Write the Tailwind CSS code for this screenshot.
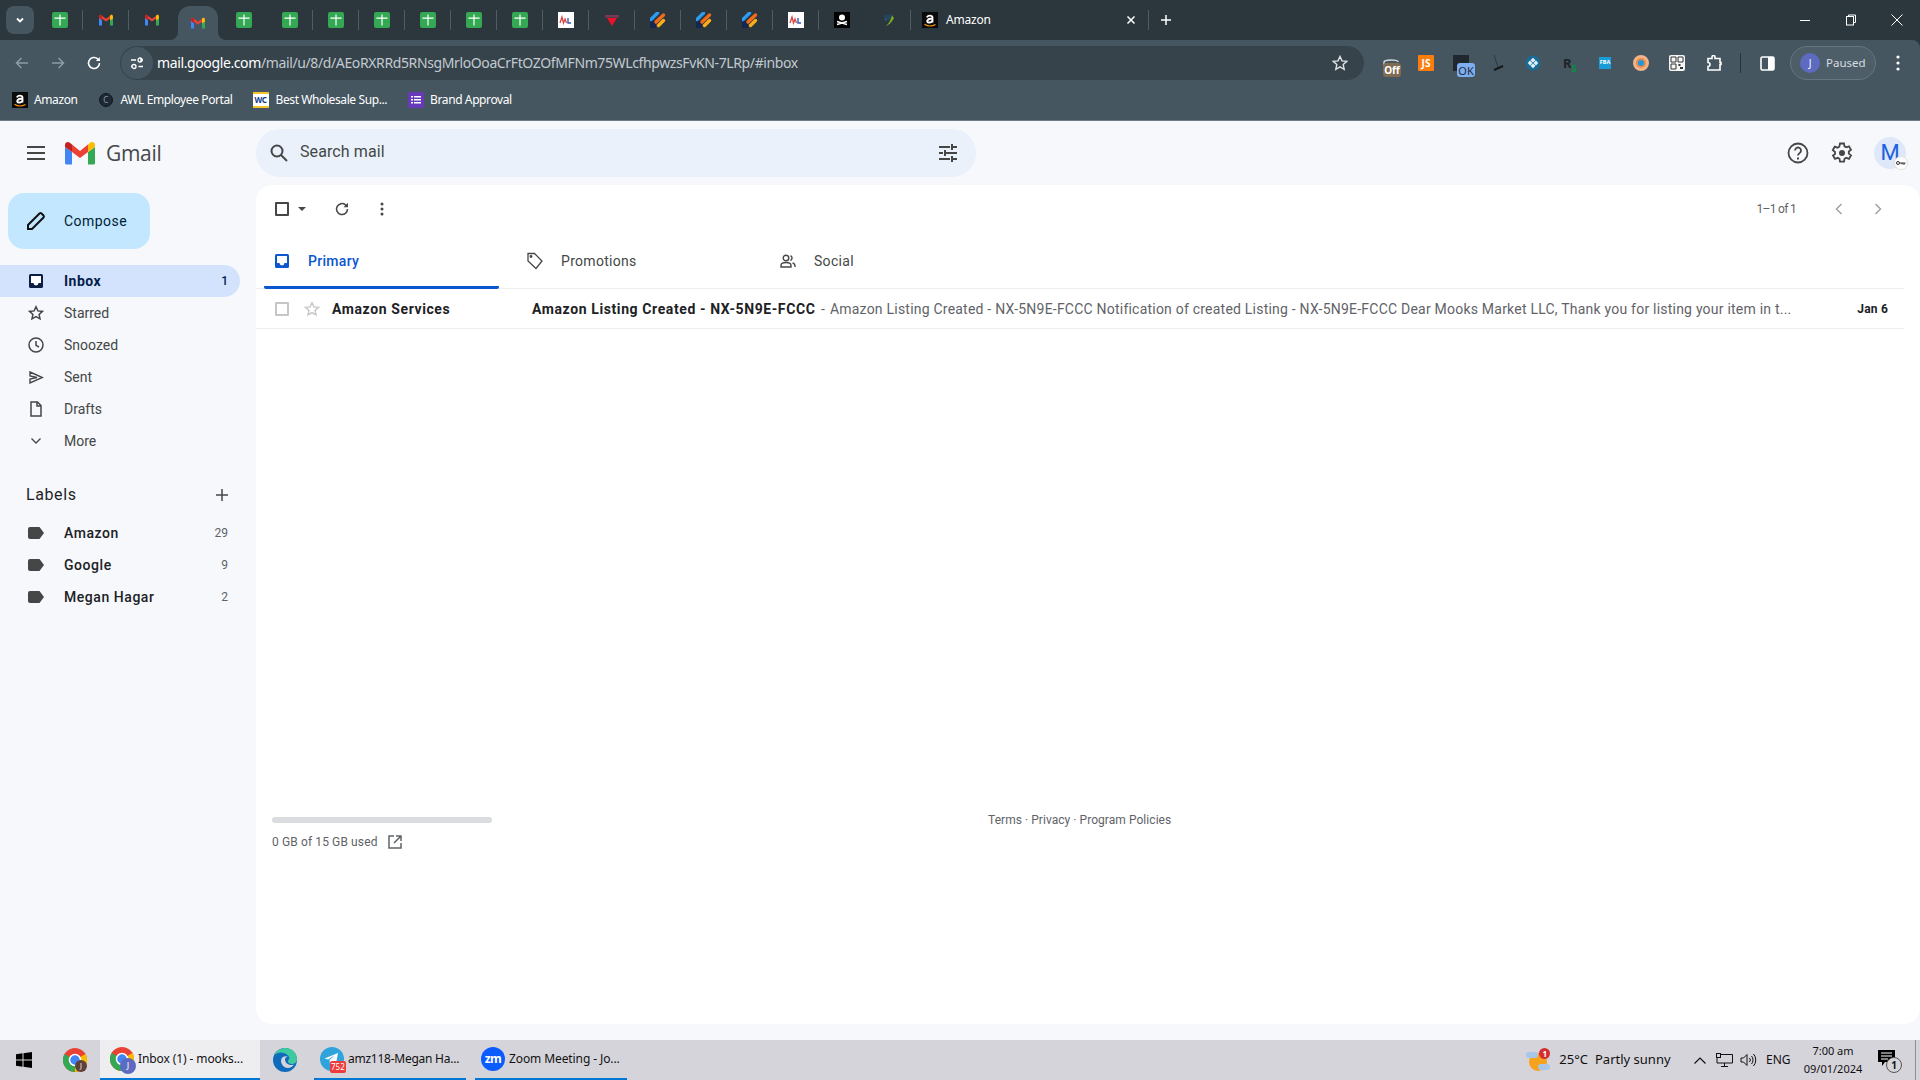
<!DOCTYPE html>
<html><head><meta charset="utf-8"><title>Inbox</title>
<script src="https://cdn.jsdelivr.net/npm/@tailwindcss/browser@4"></script></head>
<body class="w-[1920px] h-[1080px] overflow-hidden bg-[#f6f8fc] font-['Roboto',sans-serif] flex flex-col">
<svg width="0" height="0" class="absolute"><defs>
<g id="sheet"><rect width="16" height="16" rx="2" fill="#34a853"/><path d="M7.400 2.500h1.200V5.600h5V6.800h-5V13.500H7.400V6.800h-5V5.600h5z" fill="#fff"/></g>
<g id="gm"><path d="M1 3.500V13.500h3V7.500z" fill="#4285f4"/><path d="M15 3.500V13.500h-3V7.500z" fill="#34a853"/><path d="M1 4.500 8 9.500l7-5-1-2-6 4.300L2 2.500z" fill="#ea4335"/><path d="M12 3.600 14 2.500l1 2v2L12 8.500z" fill="#fbbc04"/><path d="M1 4.500 2 2.500l2 1.200v4.500L1 6z" fill="#c5221f"/></g>
<g id="jira"><rect x="0" y="9" width="6" height="7" fill="#15264f"/><path d="M1 7.500 7.500 1" stroke="#2d9bf0" stroke-width="3.400" stroke-linecap="round"/><path d="M6 10 13.500 3" stroke="#f26a1b" stroke-width="3.400" stroke-linecap="round"/><path d="M8.500 13.500l5-5" stroke="#fbae17" stroke-width="3.400" stroke-linecap="round"/></g>
<g id="wl"><rect width="16" height="16" fill="#fff"/><path d="M2 11 4 5l1.500 6L7 7l1.500 4" stroke="#d8433f" stroke-width="1.300" fill="none"/><path d="M10 6v5h3" stroke="#2f5fb5" stroke-width="1.400" fill="none"/></g>
<g id="amz"><rect width="16" height="16" fill="#0b0b0b"/><path d="M5 5.500C5.500 3 10.300 3 10.500 5.500V10.500M10.500 6.500C4.500 6.500 4 10.500 7 10.500 9 10.500 10.500 9.500 10.500 8" stroke="#fff" stroke-width="1.800" fill="none"/><path d="M2.500 12.200C6 14.500 10 14.500 13.500 12.500" stroke="#f90" stroke-width="1.100" fill="none"/></g>
<g id="chrome"><circle cx="12" cy="12" r="12" fill="#ea4335"/><path d="M12 12 22.400 6A12 12 0 0 1 12 24z" fill="#fbbc04"/><path d="M12 12 12 24A12 12 0 0 1 1.600 6z" fill="#34a853"/><circle cx="12" cy="12" r="5.500" fill="#4285f4" stroke="#fff" stroke-width="1.500"/></g>
<path id="lab" d="M2 0h9.500L16 6l-4.500 6H2a2 2 0 0 1-2-2V2a2 2 0 0 1 2-2z" fill="#444746"/>
</defs></svg>

<!-- Browser chrome -->
<header class="h-[121px] shrink-0 bg-[#2c363d] flex flex-col border-b border-[#6d7d88] font-['Noto_Sans',sans-serif]">
  <div class="h-[40px] shrink-0 flex items-center relative">
    <div class="w-[28px] h-[28px] ml-[6px] rounded-lg bg-[#455660] flex items-center justify-center"><svg width="12" height="12" viewBox="0 0 12 12" fill="none" stroke="#fff" stroke-width="1.800"><path d="M3 4.500 6 7.500 9 4.500"/></svg></div>
    <div class="flex items-center ml-[3px] h-full">
      <span class="w-[46px] flex justify-center border-r border-[#4f5c65] h-[20px] items-center"><svg width="16" height="16"><use href="#sheet"/></svg></span>
      <span class="w-[46px] flex justify-center border-r border-[#4f5c65] h-[20px] items-center"><svg width="16" height="16"><use href="#gm"/></svg></span>
      <span class="w-[46px] flex justify-center h-[20px] items-center"><svg width="16" height="16"><use href="#gm"/></svg></span>
      <span class="relative ml-[3px] mr-[3px] w-[40px] h-[34px] self-end flex justify-center items-center rounded-t-xl bg-[#455660]">
        <svg class="absolute -left-[8px] bottom-0" width="8" height="8" viewBox="0 0 8 8"><path d="M0 8a8 8 0 0 0 8-8v8z" fill="#455660"/></svg>
        <svg width="16" height="16"><use href="#gm"/></svg>
        <svg class="absolute -right-[8px] bottom-0" width="8" height="8" viewBox="0 0 8 8"><path d="M8 8a8 8 0 0 1-8-8v8z" fill="#455660"/></svg>
      </span>
      <span class="w-[46px] flex justify-center h-[20px] items-center"><svg width="16" height="16"><use href="#sheet"/></svg></span>
      <span class="w-[46px] flex justify-center border-r border-[#4f5c65] h-[20px] items-center"><svg width="16" height="16"><use href="#sheet"/></svg></span>
      <span class="w-[46px] flex justify-center border-r border-[#4f5c65] h-[20px] items-center"><svg width="16" height="16"><use href="#sheet"/></svg></span>
      <span class="w-[46px] flex justify-center border-r border-[#4f5c65] h-[20px] items-center"><svg width="16" height="16"><use href="#sheet"/></svg></span>
      <span class="w-[46px] flex justify-center border-r border-[#4f5c65] h-[20px] items-center"><svg width="16" height="16"><use href="#sheet"/></svg></span>
      <span class="w-[46px] flex justify-center border-r border-[#4f5c65] h-[20px] items-center"><svg width="16" height="16"><use href="#sheet"/></svg></span>
      <span class="w-[46px] flex justify-center border-r border-[#4f5c65] h-[20px] items-center"><svg width="16" height="16"><use href="#sheet"/></svg></span>
      <span class="w-[46px] flex justify-center border-r border-[#4f5c65] h-[20px] items-center"><svg width="16" height="16"><use href="#wl"/></svg></span>
      <span class="w-[46px] flex justify-center border-r border-[#4f5c65] h-[20px] items-center"><svg width="16" height="16" viewBox="0 0 16 16"><path d="M1 3h14v2.500H1z" fill="#7a3a55"/><path d="M3 6h10l-5 8z" fill="#e8132b"/></svg></span>
      <span class="w-[46px] flex justify-center border-r border-[#4f5c65] h-[20px] items-center"><svg width="16" height="16"><use href="#jira"/></svg></span>
      <span class="w-[46px] flex justify-center border-r border-[#4f5c65] h-[20px] items-center"><svg width="16" height="16"><use href="#jira"/></svg></span>
      <span class="w-[46px] flex justify-center border-r border-[#4f5c65] h-[20px] items-center"><svg width="16" height="16"><use href="#jira"/></svg></span>
      <span class="w-[46px] flex justify-center border-r border-[#4f5c65] h-[20px] items-center"><svg width="16" height="16"><use href="#wl"/></svg></span>
      <span class="w-[46px] flex justify-center h-[20px] items-center"><svg width="16" height="16" viewBox="0 0 16 16"><rect width="16" height="16" fill="#000"/><circle cx="8" cy="5.500" r="3" fill="#fff"/><path d="M3 12.500 13 9.500M3 9.500l10 3" stroke="#fff" stroke-width="1.800"/></svg></span>
      <span class="w-[46px] flex justify-center border-r border-[#4f5c65] h-[20px] items-center"><svg width="16" height="16" viewBox="0 0 16 16"><path d="M3 4c4-2 8-2 11-1L9 9z" fill="#26445a"/><path d="M12 3.500C11 8 8.500 12 5.500 14.500 9 13 12 10 14 6z" fill="#7eaf23"/><path d="M4 6.500c2-1 3-.5 3.500 1l-2 2z" fill="#26547a"/></svg></span>
    </div>
    <div class="w-[238px] flex items-center h-[20px] border-r border-[#4f5c65] pl-[11px] pr-[12px] text-white text-[12px] tracking-[-0.2px]">
      <svg width="16" height="16"><use href="#amz"/></svg><span class="ml-[8px] flex-1">Amazon</span>
      <svg width="10" height="10" viewBox="0 0 10 10" stroke="#fff" stroke-width="1.500"><path d="M1.500 1.500l7 7M8.500 1.500l-7 7"/></svg>
    </div>
    <svg class="ml-[11px]" width="12" height="12" viewBox="0 0 12 12" stroke="#fff" stroke-width="1.500"><path d="M6 1v10M1 6h10"/></svg>
    <div class="ml-auto flex items-center h-full pr-[17px] gap-[34px]">
      <svg width="12" height="12" viewBox="0 0 12 12" stroke="#fff"><path d="M1 6.500h10"/></svg>
      <svg width="12" height="12" viewBox="0 0 12 12" stroke="#fff" fill="none"><path d="M3.500 2.500V1h7v7.500H8.500"/><rect x="1.500" y="2.500" width="7" height="8.500"/></svg>
      <svg width="12" height="12" viewBox="0 0 12 12" stroke="#fff"><path d="M.5.500l11 11M11.500.500l-11 11"/></svg>
    </div>
  </div>
  <div class="flex-1 bg-[#455660] rounded-tr-lg flex flex-col">
    <div class="h-[41px] flex items-center relative pt-[5px]">
      <svg class="ml-[14px]" width="16" height="16" viewBox="0 0 16 16" fill="none" stroke="#8d9aa3" stroke-width="1.500"><path d="M14 8H2.500M7.500 3 2.500 8l5 5"/></svg>
      <svg class="ml-[20px]" width="16" height="16" viewBox="0 0 16 16" fill="none" stroke="#8d9aa3" stroke-width="1.500"><path d="M2 8h11.500M8.500 3l5 5-5 5"/></svg>
      <svg class="ml-[20px]" width="16" height="16" viewBox="0 0 16 16" fill="none" stroke="#fff" stroke-width="1.600"><path d="M13.500 8A5.500 5.500 0 1 1 11.800 4L13.500 5.700"/><path d="M13.800 2v4h-4z" fill="#fff" stroke="none"/></svg>
      <div class="ml-[18px] w-[1244px] h-[34px] rounded-full bg-[#36434b] flex items-center relative">
        <span class="ml-[1px] w-[32px] h-[32px] rounded-full bg-[#455660] flex items-center justify-center"><svg width="14" height="14" viewBox="0 0 14 14" fill="none" stroke="#fff" stroke-width="1.300"><path d="M1 4h5M8.500 10.500H13"/><circle cx="10" cy="4" r="2"/><circle cx="4" cy="10.500" r="2"/><path d="M10 4h3M1 10.500h1"/></svg></span>
        <span class="ml-[4px] text-[14px] leading-none tracking-[-0.38px] text-[#c2cad0] whitespace-nowrap"><span class="text-white">mail.google.com</span>/mail/u/8/d/AEoRXRRd5RNsgMrloOoaCrFtOZOfMFNm75WLcfhpwzsFvKN-7LRp/#inbox</span>
        <svg class="absolute right-[16px] top-[9px]" width="16" height="16" viewBox="0 0 16 16" fill="none" stroke="#dfe3e6" stroke-width="1.400"><path d="M8 1.500l2 4.400 4.700.5-3.500 3.200 1 4.700L8 11.900l-4.200 2.400 1-4.700L1.300 6.400 6 5.900z"/></svg>
      </div>
      <!-- extensions -->
      <div class="relative ml-[19px] w-[18px] h-[16px]">
        <svg class="absolute left-0 top-[4px]" width="16" height="10" viewBox="0 0 16 10" fill="none" stroke="#cfd4d8" stroke-width="1.500"><path d="M1 9V3C1 2 4 1 8 1s7 .800 7 2"/></svg>
        <span class="absolute left-0 top-[8px] w-[18px] h-[14px] rounded-[3px] bg-[#7f6a52] text-white text-[10px] font-bold flex items-center justify-center leading-none">Off</span>
      </div>
      <span class="ml-[17px] w-[16px] h-[16px] rounded-[1px] bg-[#fb7d0e] text-white text-[10px] font-bold flex items-center justify-center">JS</span>
      <div class="relative ml-[19px] w-[22px] h-[16px]">
        <span class="absolute left-0 top-0 w-[16px] h-[16px] bg-[#20272e]"></span>
        <span class="absolute left-[4px] top-[8px] w-[18px] h-[14px] rounded-[3px] bg-[#7eaef0] text-[#1e2a3a] text-[11px] flex items-center justify-center leading-none">OK</span>
      </div>
      <svg class="ml-[18px]" width="12" height="16" viewBox="0 0 12 16" fill="none"><path d="M1 0l4 12" stroke="#2b3237" stroke-width=".8"/><path d="M1 15l9-4" stroke="#14181b" stroke-width="2"/></svg>
      <svg class="ml-[20px]" width="16" height="16" viewBox="0 0 16 16"><circle cx="8" cy="8" r="7.500" fill="#1c6a96"/><path d="M8 2.800 10.500 5.300 8 7.500 5.500 5.300zM8 8.500l2.500 2.200L8 13.200 5.500 10.700zM7.500 8 5 10.500 2.800 8 5 5.500zM8.500 8 11 5.500 13.200 8 11 10.500z" fill="#dff1fb"/></svg>
      <span class="ml-[22px] w-[16px] text-[13px] font-bold text-[#1d2227] leading-none relative">R<span class="absolute left-[8px] top-[5px] text-[#0e8a45] text-[12px]">s</span></span>
      <span class="ml-[20px] w-[12px] h-[12px] bg-[#1a9cd8] text-white text-[5.500px] font-bold flex items-center justify-center leading-none">FBA</span>
      <span class="ml-[22px] w-[16px] h-[16px] rounded-full bg-[#e98a4b] border-[3px] border-[#f1b48a] flex items-center justify-center"><span class="w-[6px] h-[6px] rounded-full bg-[#1f96dd]"></span></span>
      <svg class="ml-[20px]" width="16" height="16" viewBox="0 0 16 16"><rect width="16" height="16" rx="2" fill="#f5f5f5"/><path d="M2 2h5v5H2zM9 2h5v5H9zM2 9h5v5H2z" fill="none" stroke="#333"/><path d="M9.500 9h2v2h-2zM11 12h3v2h-3z" fill="#333"/></svg>
      <svg class="ml-[21px]" width="16" height="16" viewBox="0 0 16 16" fill="none" stroke="#fff" stroke-width="1.600"><path d="M2 3.500h4V2a1.500 1.500 0 0 1 3 0v1.500h5v4h1v2h-1V15H2v-3.500a2 2 0 0 0 0-4z"/></svg>
      <span class="ml-[18px] w-[1px] h-[20px] bg-[#2a3339]"></span>
      <svg class="ml-[19px]" width="15" height="15" viewBox="0 0 15 15"><rect x="1" y="1" width="13" height="13" rx="1.500" fill="none" stroke="#fff" stroke-width="1.600"/><rect x="8" y="1" width="6" height="13" fill="#fff"/></svg>
      <div class="ml-[15px] w-[86px] h-[34px] rounded-full border border-[#657680] bg-[#4e5e68] flex items-center pl-[9px] gap-[6px] text-[11.500px] text-[#d6dde2]">
        <span class="w-[20px] h-[20px] rounded-full bg-[#5c6bc0] text-white text-[10px] flex items-center justify-center">J</span>Paused</div>
      <svg class="ml-[19px]" width="6" height="16" viewBox="0 0 6 16" fill="#fff"><circle cx="3" cy="2" r="1.600"/><circle cx="3" cy="8" r="1.600"/><circle cx="3" cy="14" r="1.600"/></svg>
    </div>
    <div class="flex-1 flex items-center pl-[12px] pb-[1px] text-[12px] text-white tracking-[-0.4px] leading-none">
      <svg width="16" height="16"><use href="#amz"/></svg><span class="ml-[6px]">Amazon</span>
      <span class="ml-[21px] w-[14px] h-[14px] rounded-full bg-[#1d2a35] border border-[#10181e] flex items-center justify-center text-[8px] text-[#8a98a3]">C</span><span class="ml-[8px]">AWL Employee Portal</span>
      <span class="ml-[20px] w-[16px] h-[16px] bg-white relative overflow-hidden flex items-center justify-center text-[8px] font-bold text-[#123a8c] border-y-[2px] border-[#f6c32c]">WC</span><span class="ml-[7px]">Best Wholesale Sup...</span>
      <span class="ml-[21px] w-[16px] h-[16px] bg-[#673ab7] flex items-center justify-center"><svg width="10" height="8" viewBox="0 0 10 8" fill="#fff"><path d="M0 0h2v1.500H0zM3 0h7v1.500H3zM0 3h2v1.500H0zM3 3h7v1.500H3zM0 6h2v1.500H0zM3 6h7v1.500H3z"/></svg></span><span class="ml-[6px]">Brand Approval</span>
    </div>
  </div>
</header>

<!-- Gmail -->
<div class="flex-1 flex flex-col min-h-0">
  <div class="h-[64px] shrink-0 flex items-center relative">
    <svg class="ml-[26px]" width="20" height="14" viewBox="0 0 20 14" fill="#444746"><path d="M1 0h18v2H1zM1 6h18v2H1zM1 12h18v2H1z"/></svg>
    <svg class="ml-[18px]" width="32" height="24" viewBox="0 0 32 24"><path d="M1 6v16a1.500 1.500 0 0 0 1.500 1.500H8V11z" fill="#4285f4"/><path d="M31 6v16a1.500 1.500 0 0 1-1.500 1.500H24V11z" fill="#34a853"/><path d="M8 11V3.500L16 10l8-6.500V11l-8 6z" fill="#ea4335"/><path d="M24 3.500l2.500-2C28.500 0 31 1.500 31 4v2l-7 5z" fill="#fbbc04"/><path d="M8 3.500l-2.500-2C3.500 0 1 1.500 1 4v2l7 5z" fill="#c5221f"/></svg>
    <span class="ml-[10px] w-[58px] text-[21px] leading-none text-[#444746] font-['Open_Sans',sans-serif] tracking-[-0.3px]">Gmail</span>
    <div class="ml-[92px] w-[720px] h-[48px] rounded-full bg-[#eaf1fb] flex items-center">
      <svg class="ml-[13px]" width="20" height="20" viewBox="0 0 20 20" fill="none" stroke="#444746" stroke-width="2"><circle cx="8" cy="8" r="5.500"/><path d="M12 12l6 6"/></svg>
      <span class="ml-[11px] text-[16px] text-[#444746] -mt-[2px] tracking-[0.1px]">Search mail</span>
      <svg class="ml-auto mr-[18px]" width="20" height="18" viewBox="0 0 20 18" stroke="#444746" stroke-width="2"><path d="M1 3h11M15 3h4M14 0v6M1 9h4M8 9h11M7 6v6M1 15h11M15 15h4M14 12v6" fill="none"/></svg>
    </div>
    <div class="ml-auto flex items-center">
      <svg width="24" height="24" viewBox="0 0 24 24" fill="none" stroke="#444746" stroke-width="1.800"><circle cx="12" cy="12" r="9.500"/><path d="M9 9.500a3 3 0 1 1 4.800 2.400c-1 .800-1.800 1.300-1.800 2.600"/><path d="M11 16.500h2v2h-2z" fill="#444746" stroke="none"/></svg>
      <svg class="ml-[20px]" width="24" height="24" viewBox="0 0 24 24" fill="none" stroke="#444746" stroke-width="1.800"><path d="M10 2.500h4l.5 2.800 1.800 1 2.700-1 2 3.400-2.200 1.800v2.100l2.200 1.800-2 3.400-2.700-1-1.800 1-.5 2.800h-4l-.5-2.800-1.800-1-2.700 1-2-3.400L5 13V11L2.800 9.100l2-3.400 2.700 1 1.800-1z"/><circle cx="12" cy="12" r="3" fill="#444746" stroke="none"/></svg>
      <div class="relative ml-[20px] mr-[14px] w-[32px] h-[32px] rounded-full bg-[#dfe8f8] flex items-center justify-center text-[22px] text-[#1a62e0] leading-none">M
        <span class="absolute -right-[2px] -bottom-[1px] w-[14px] h-[14px] rounded-full bg-white border border-[#e0e0e0] flex items-center justify-center"><svg width="10" height="5" viewBox="0 0 10 5" fill="none" stroke="#333"><circle cx="2" cy="2" r="1.500"/><path d="M3.500 2H9.500M8 2v2M6 2v1.500"/></svg></span>
      </div>
    </div>
  </div>

  <div class="flex-1 flex min-h-0">
    <nav class="w-[256px] shrink-0 flex flex-col text-[14px] text-[#444746]">
      <div class="ml-[8px] mt-[8px] w-[142px] h-[56px] rounded-2xl bg-[#c2e7ff] flex items-center text-[#001d35]">
        <svg class="ml-[18px]" width="20" height="20" viewBox="0 0 20 20" fill="none" stroke="#111" stroke-width="2"><path d="M2 18v-4L13.500 2.500a1.500 1.500 0 0 1 2 0l2 2a1.500 1.500 0 0 1 0 2L6 18z"/></svg>
        <span class="ml-[18px] text-[14px] tracking-[0.45px]">Compose</span>
      </div>
      <div class="mt-[16px] w-[240px] h-[32px] rounded-r-full bg-[#d3e3fd] flex items-center font-bold text-[#041e49]">
        <svg class="ml-[29px]" width="14" height="14" viewBox="0 0 14 14"><path d="M0 1.500A1.500 1.500 0 0 1 1.500 0h11A1.500 1.500 0 0 1 14 1.500v11a1.500 1.500 0 0 1-1.500 1.500h-11A1.500 1.500 0 0 1 0 12.500z" fill="#0b1f45"/><path d="M2 2h10v7H9.500a2.500 2.500 0 0 1-5 0H2z" fill="#fff"/></svg>
        <span class="ml-[21px] flex-1 tracking-[0.5px]">Inbox</span><span class="mr-[12px] text-[12px] font-medium">1</span>
      </div>
      <div class="w-[240px] h-[32px] flex items-center">
        <svg class="ml-[28px]" width="16" height="16" viewBox="0 0 16 16" fill="none" stroke="#444746" stroke-width="1.500"><path d="M8 1.800l1.900 4.100 4.500.5-3.300 3 .9 4.500L8 11.600l-4 2.300.9-4.500-3.300-3 4.500-.5z"/></svg>
        <span class="ml-[20px]">Starred</span></div>
      <div class="w-[240px] h-[32px] flex items-center">
        <svg class="ml-[28px]" width="16" height="16" viewBox="0 0 16 16" fill="none" stroke="#444746" stroke-width="1.500"><circle cx="8" cy="8" r="7"/><path d="M8 4v4.300l3 1.700"/></svg>
        <span class="ml-[20px]">Snoozed</span></div>
      <div class="w-[240px] h-[32px] flex items-center">
        <svg class="ml-[29px]" width="15" height="13" viewBox="0 0 15 13" fill="none" stroke="#444746" stroke-width="1.400"><path d="M1 1l12.500 5.500L1 12V8l7-1.500L1 5z"/></svg>
        <span class="ml-[20px]">Sent</span></div>
      <div class="w-[240px] h-[32px] flex items-center">
        <svg class="ml-[30px]" width="12" height="16" viewBox="0 0 12 16" fill="none" stroke="#444746" stroke-width="1.500"><path d="M1 1h6.500L11 4.500V15H1zM7 1v4h4"/></svg>
        <span class="ml-[22px]">Drafts</span></div>
      <div class="w-[240px] h-[32px] flex items-center">
        <svg class="ml-[31px]" width="10" height="6" viewBox="0 0 10 6" fill="none" stroke="#444746" stroke-width="1.300"><path d="M.500.500 5 5 9.500.500"/></svg>
        <span class="ml-[23px]">More</span></div>
      <div class="mt-[22px] h-[32px] w-[240px] flex items-center">
        <span class="ml-[26px] flex-1 text-[16px] text-[#1f1f1f] tracking-[0.6px]">Labels</span>
        <svg class="mr-[12px]" width="12" height="12" viewBox="0 0 12 12" stroke="#444746" stroke-width="1.500"><path d="M6 0v12M0 6h12"/></svg>
      </div>
      <div class="mt-[6px] w-[240px] h-[32px] flex items-center font-medium text-[#202124]">
        <svg class="ml-[28px]" width="16" height="12" viewBox="0 0 16 12"><use href="#lab"/></svg>
        <span class="ml-[20px] flex-1 tracking-[0.55px]">Amazon</span><span class="mr-[12px] text-[12px] font-normal text-[#5f6368]">29</span></div>
      <div class="w-[240px] h-[32px] flex items-center font-medium text-[#202124]">
        <svg class="ml-[28px]" width="16" height="12" viewBox="0 0 16 12"><use href="#lab"/></svg>
        <span class="ml-[20px] flex-1 tracking-[0.55px]">Google</span><span class="mr-[12px] text-[12px] font-normal text-[#5f6368]">9</span></div>
      <div class="w-[240px] h-[32px] flex items-center font-medium text-[#202124]">
        <svg class="ml-[28px]" width="16" height="12" viewBox="0 0 16 12"><use href="#lab"/></svg>
        <span class="ml-[20px] flex-1 tracking-[0.55px]">Megan Hagar</span><span class="mr-[12px] text-[12px] font-normal text-[#5f6368]">2</span></div>
    </nav>

    <main class="flex-1 mb-[16px] bg-white rounded-2xl flex flex-col min-w-0">
      <div class="h-[48px] shrink-0 flex items-center">
        <span class="ml-[19px] w-[14px] h-[14px] border-2 border-[#444746] rounded-[1px]"></span>
        <svg class="ml-[9px]" width="8" height="4" viewBox="0 0 8 4" fill="#444746"><path d="M0 0h8L4 4z"/></svg>
        <svg class="ml-[28px]" width="16" height="16" viewBox="0 0 16 16" fill="none" stroke="#444746" stroke-width="1.500"><path d="M13.500 8A5.500 5.500 0 1 1 11.500 3.800L13.500 5.500"/><path d="M14 1.800V6.200H9.600z" fill="#444746" stroke="none"/></svg>
        <svg class="ml-[30px]" width="4" height="14" viewBox="0 0 4 14" fill="#444746"><circle cx="2" cy="2" r="1.500"/><circle cx="2" cy="7" r="1.500"/><circle cx="2" cy="12" r="1.500"/></svg>
        <span class="ml-auto text-[12px] text-[#5f6368] tracking-[-0.7px]">1–1 of 1</span>
        <svg class="ml-[39px]" width="8" height="12" viewBox="0 0 8 12" fill="none" stroke="#9aa0a6" stroke-width="1.400"><path d="M6.500 1 1.500 6l5 5"/></svg>
        <svg class="ml-[31px] mr-[38px]" width="8" height="12" viewBox="0 0 8 12" fill="none" stroke="#9aa0a6" stroke-width="1.400"><path d="M1.500 1l5 5-5 5"/></svg>
      </div>
      <div class="h-[56px] mr-[16px] shrink-0 flex border-b border-[#eceff1] relative text-[14px] text-[#444746] tracking-[0.3px]">
        <div class="ml-[8px] w-[235px] h-[56px] pt-[3px] flex items-center border-b-[3px] border-[#0b57d0] rounded-b-[2px] font-medium text-[#0b57d0]">
          <svg class="ml-[11px]" width="14" height="14" viewBox="0 0 14 14"><rect width="14" height="14" rx="1.500" fill="#0b57d0"/><path d="M2 2h10v7H9.500a2.500 2.500 0 0 1-5 0H2z" fill="#fff"/></svg>
          <span class="ml-[19px]">Primary</span></div>
        <div class="ml-[28px] w-[253px] h-[56px] flex items-center">
          <svg width="16" height="18" viewBox="0 0 16 18" fill="none" stroke="#444746" stroke-width="1.300"><path d="M1 1.500h6.500L15 9l-6 7.500L1 9z"/><circle cx="4" cy="4.500" r=".800" fill="#444746"/></svg>
          <span class="ml-[18px]">Promotions</span></div>
        <div class="w-[200px] h-[56px] flex items-center">
          <svg width="16" height="14" viewBox="0 0 16 14" fill="none" stroke="#444746" stroke-width="1.400"><circle cx="6" cy="4" r="2.800"/><path d="M1 13v-1.500C1 9.500 3.500 8.500 6 8.500s5 1 5 3V13zM10.500 1.500a2.800 2.800 0 0 1 0 5M12.500 8.800c1.500.500 2.500 1.500 2.500 3V13"/></svg>
          <span class="ml-[18px]">Social</span></div>
      </div>
      <div class="h-[40px] mr-[16px] pt-[1px] shrink-0 flex items-center border-b border-[#eceff1] text-[14px] relative">
        <span class="ml-[19px] w-[14px] h-[14px] border-2 border-[#c4c7c5] rounded-[1px]"></span>
        <svg class="ml-[15px]" width="16" height="16" viewBox="0 0 16 16" fill="none" stroke="#c4c7c5" stroke-width="1.400"><path d="M8 1.800l1.900 4.100 4.500.5-3.300 3 .9 4.500L8 11.600l-4 2.300.9-4.500-3.300-3 4.500-.5z"/></svg>
        <span class="ml-[12px] w-[200px] font-bold text-[#202124] tracking-[0.6px]">Amazon Services</span>
        <span class="whitespace-nowrap text-[#5f6368] tracking-[0.22px]"><b class="font-bold text-[#202124] tracking-[0.6px]">Amazon Listing Created - NX-5N9E-FCCC</b><span class="ml-[2px]"> - </span><span class="ml-[1px]">Amazon Listing Created - NX-5N9E-FCCC Notification of created Listing - NX-5N9E-FCCC Dear Mooks Market LLC, Thank you for listing your item in t...</span></span>
        <span class="ml-auto mr-[16px] text-[12px] font-bold text-[#202124] tracking-[0.2px]">Jan 6</span>
      </div>
      <div class="mt-auto mb-[173px] flex items-start relative">
        <div class="ml-[16px] w-[220px]">
          <div class="h-[6px] rounded-full bg-[#dadce0]"></div>
          <div class="mt-[10px] flex items-center text-[12px] text-[#5f6368] tracking-[0.12px] whitespace-nowrap">0 GB of 15 GB used
            <svg class="ml-[10px]" width="14" height="14" viewBox="0 0 14 14" fill="none" stroke="#5f6368" stroke-width="1.500"><path d="M6 1H1v12h12V8M8 1h5v5M13 1 6 8"/></svg></div>
        </div>
        <div class="ml-[496px] -mt-[6px] text-[12px] text-[#5f6368] tracking-[0.05px]">Terms · Privacy · Program Policies</div>
      </div>
    </main>
  </div>
</div>

<!-- Taskbar -->
<footer class="h-[40px] shrink-0 bg-[#d5d4da] flex items-center text-[12px] text-[#111] font-['Noto_Sans',sans-serif] relative">
  <svg class="ml-[16px]" width="16" height="16" viewBox="0 0 16 16" fill="#000"><path d="M0 2.200 6.500 1.300v6.200H0zM7.500 1.200 16 0v7.500H7.500zM0 8.500h6.500v6.200L0 13.800zM7.500 8.500H16V16l-8.500-1.200z"/></svg>
  <div class="ml-[31px] w-[38px] h-full flex items-center relative">
    <svg width="24" height="24"><use href="#chrome"/></svg>
    <span class="absolute left-[12px] top-[20px] w-[12px] h-[12px] rounded-full bg-[#5d4037] text-white text-[7px] flex items-center justify-center">J</span>
  </div>
  <div class="-ml-[1px] w-[160px] h-full bg-[#eeeef1] border-b-[2px] border-[#0078d4] flex items-center pl-[10px] relative">
    <svg width="24" height="24"><use href="#chrome"/></svg>
    <span class="absolute left-[20px] top-[18px] w-[16px] h-[16px] rounded-full bg-[#5c6bc0] text-white text-[9px] flex items-center justify-center">J</span>
    <span class="ml-[4px] whitespace-nowrap tracking-[-0.1px]">Inbox (1) - mooks...</span>
  </div>
  <svg class="ml-[13px]" width="24" height="24" viewBox="0 0 24 24"><circle cx="12" cy="12" r="12" fill="#0f6cbd"/><path d="M1 8C3 2 9 0 13 0c6 0 11 5 11 11 0 2.500-1.500 5-5 5-2.500 0-4-1-4-2.500C15 11 18 11 15 7.500 11 3 3 4 1 8z" fill="#3fc9a0"/><path d="M8 13a4.500 4.500 0 0 1 7-4c-3 0-3.500 2-2.500 4.500 1 3 5 4.500 8.500 3-3 5-12 5-13-3.500z" fill="#d5d4da"/></svg>
  <div class="ml-[17px] w-[152px] h-full border-b-[2px] border-[#0078d4] flex items-center pl-[6px] relative">
    <svg width="24" height="24" viewBox="0 0 24 24"><circle cx="12" cy="12" r="12" fill="#2fa3dc"/><path d="M4.500 11.500 18 6l-2.200 12-3.800-3-2 2-.5-4 5.500-5-7 4.500z" fill="#fff"/></svg>
    <span class="absolute left-[16px] top-[21px] h-[12px] px-[1px] rounded-[2px] bg-[#ef3b3b] text-white text-[8px] leading-[12px]">752</span>
    <span class="ml-[4px] whitespace-nowrap tracking-[-0.25px]">amz118-Megan Ha...</span>
  </div>
  <div class="ml-[9px] w-[152px] h-full border-b-[2px] border-[#0078d4] flex items-center pl-[6px]">
    <span class="w-[24px] h-[24px] rounded-full bg-[#0b5cff] text-white font-bold text-[12px] flex items-center justify-center leading-none tracking-[-0.5px]">zm</span>
    <span class="ml-[4px] whitespace-nowrap tracking-[-0.1px]">Zoom Meeting - Jo...</span>
  </div>
  <div class="ml-auto flex items-center h-full">
    <div class="relative w-[26px] h-[24px]">
      <span class="absolute left-[3px] top-[5px] w-[18px] h-[18px] rounded-full bg-[#f6a21e]"></span>
      <span class="absolute left-[0px] top-[4px] w-[12px] h-[6px] rounded-full bg-[#a9c6e8]"></span>
      <span class="absolute left-[12px] top-[16px] w-[12px] h-[6px] rounded-full bg-[#a9c6e8]"></span>
      <span class="absolute left-[13px] top-[0px] w-[11px] h-[11px] rounded-full bg-[#d32f2f] text-white text-[8px] font-bold flex items-center justify-center leading-none">1</span>
    </div>
    <span class="ml-[7px] text-[13px]">25°C</span>
    <span class="ml-[7px] text-[13px] w-[75px] whitespace-nowrap">Partly sunny</span>
    <svg class="ml-[24px]" width="12" height="7" viewBox="0 0 12 7" fill="none" stroke="#111" stroke-width="1.200"><path d="M.500 6.500 6 1l5.500 5.500"/></svg>
    <svg class="ml-[10px]" width="17" height="14" viewBox="0 0 17 14" fill="none" stroke="#111"><path d="M4 1.500h12.500v8.500H1V4M8.500 10v3M5 13.500h7"/><rect x=".500" y=".500" width="4" height="4" fill="#d5d4da"/></svg>
    <svg class="ml-[7px]" width="17" height="14" viewBox="0 0 17 14" fill="none" stroke="#111"><path d="M1 5v4h2.500L7 12.500v-11L3.500 5zM9.500 5a3 3 0 0 1 0 4M11.500 3a6 6 0 0 1 0 8M13.500 1a9 9 0 0 1 0 12"/></svg>
    <span class="ml-[9px] text-[12px] w-[24px] whitespace-nowrap">ENG</span>
    <div class="ml-[12px] w-[62px] flex flex-col items-center text-[11px] leading-[18px] whitespace-nowrap"><span>7:00 am</span><span>09/01/2024</span></div>
    <div class="relative ml-[14px] w-[24px] h-[24px]">
      <svg class="absolute left-[0px] top-[2px]" width="17" height="17" viewBox="0 0 17 17"><path d="M0 0h17v12H7l-3 4v-4H0z" fill="#000"/><path d="M3 3h11M3 6h11M3 9h7" stroke="#fff"/></svg>
      <span class="absolute left-[8px] top-[9px] w-[16px] h-[16px] rounded-full bg-[#d5d4da] border border-[#555] text-[10px] font-bold flex items-center justify-center leading-none">1</span>
    </div>
    <span class="ml-[13px] mr-[4px] w-[1px] h-full bg-[#8f8f94]"></span>
  </div>
</footer>
</body></html>
